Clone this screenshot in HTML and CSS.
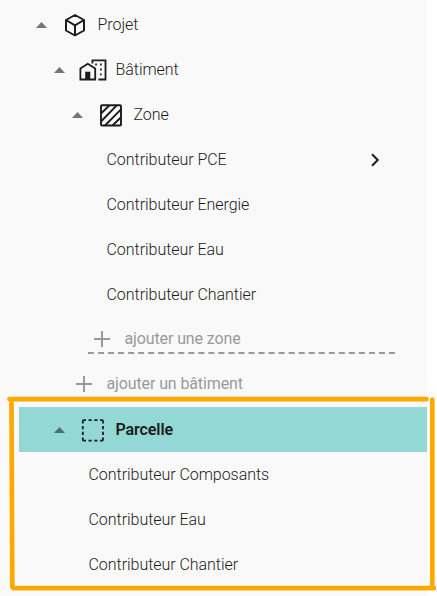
FILE: index.html
```html
<!DOCTYPE html>
<html lang="fr">
<head>
    <meta charset="UTF-8">
    <meta name="viewport" content="width=device-width, initial-scale=1.0">
    <title>Projet</title>
    <link rel="stylesheet" href="styles.css">
</head>
<body>
    <div class="tree">
        <div class="row level-1">
            <svg class="arrow" viewBox="0 0 11 6"><path d="M0 6L5.5 0L11 6Z"/></svg>
            <svg class="icon" viewBox="0 0 28 28" fill="none" stroke="#1c1c1c" stroke-width="2" stroke-linejoin="round">
                <path d="M14 4L23 9V19.5L14 24.5L5 19.5V9ZM5 9L14 14.3L23 9M14 14.3V24.5"/>
            </svg>
            <span class="label">Projet</span>
        </div>

        <div class="row level-2">
            <svg class="arrow" viewBox="0 0 11 6"><path d="M0 6L5.5 0L11 6Z"/></svg>
            <svg class="icon" viewBox="0 0 28 28" fill="none" stroke="#1c1c1c" stroke-width="1.8">
                <path d="M1.4 23.5V12.6L8.8 7.8L16.2 12.6V23.5Z"/>
                <path d="M6.2 24V15.7H11.3V24Z" fill="#1c1c1c" stroke="none"/>
                <path d="M13.4 7.5V4.4H26.5V23.5H19.4"/>
                <path d="M16.2 8.5H17.9M21 8.5H22.7M21 13.5H22.7M21 18.3H22.7"/>
            </svg>
            <span class="label">Bâtiment</span>
        </div>

        <div class="row level-3">
            <svg class="arrow" viewBox="0 0 11 6"><path d="M0 6L5.5 0L11 6Z"/></svg>
            <svg class="icon" viewBox="0 0 28 28" fill="none" stroke="#1c1c1c" stroke-width="1.9">
                <rect x="4" y="4.2" width="20" height="20.3" rx="1"/>
                <path d="M4 12.5L12.5 4.2M4 20.5L20 4.2M8 24.5L24 8.3M15.5 24.5L24 16.3"/>
            </svg>
            <span class="label">Zone</span>
        </div>

        <div class="row leaf-3">
            <span class="label">Contributeur PCE</span>
            <svg class="chevron" viewBox="0 0 10 14" fill="none" stroke="#1c1c1c" stroke-width="2">
                <path d="M2 1.3L7.7 7L2 12.7"/>
            </svg>
        </div>
        <div class="row leaf-3"><span class="label">Contributeur Energie</span></div>
        <div class="row leaf-3"><span class="label">Contributeur Eau</span></div>
        <div class="row leaf-3"><span class="label">Contributeur Chantier</span></div>

        <div class="add add-zone">
            <svg class="plus" viewBox="0 0 16 16" stroke="#999" stroke-width="2"><path d="M0 8H16M8 0V16"/></svg>
            <span>ajouter une zone</span>
        </div>
        <div class="add add-building">
            <svg class="plus" viewBox="0 0 16 16" stroke="#999" stroke-width="2"><path d="M0 8H16M8 0V16"/></svg>
            <span>ajouter un bâtiment</span>
        </div>

        <div class="row level-2 selected">
            <svg class="arrow" viewBox="0 0 11 6"><path d="M0 6L5.5 0L11 6Z"/></svg>
            <svg class="icon" viewBox="0 0 28 28" fill="none" stroke="#1c1c1c" stroke-width="1.8">
                <path d="M3.8 7.5V5.2Q3.8 4.2 4.8 4.2H7M21 4.2H23Q24 4.2 24 5.2V7.5M24 21.5V23.6Q24 24.6 23 24.6H21M7 24.6H4.8Q3.8 24.6 3.8 23.6V21.5"/>
                <path d="M9.5 4.2H12.7M15.3 4.2H18.5M9.5 24.6H12.7M15.3 24.6H18.5M3.8 10V13.2M3.8 15.8V19M24 10V13.2M24 15.8V19"/>
            </svg>
            <span class="label">Parcelle</span>
        </div>
        <div class="row leaf-2"><span class="label">Contributeur Composants</span></div>
        <div class="row leaf-2"><span class="label">Contributeur Eau</span></div>
        <div class="row leaf-2"><span class="label">Contributeur Chantier</span></div>
    </div>

    <!-- Cadre autour de la parcelle -->
    <svg class="frame" viewBox="0 0 437 596" fill="none" stroke="#ffa900" stroke-width="4.7" stroke-linecap="round">
        <path d="M9.5 399.2H426.5M11.5 403L12.3 587M432.3 399.5V586M13.5 588.2H434"/>
    </svg>
</body>
</html>
```
FILE: styles.css
```css
* {
    box-sizing: border-box;
}

body {
    margin: 0;
    background: #fff;
    color: #1c1c1c;
    font-family: Roboto, sans-serif;
    font-size: 16px;
    font-weight: 300;
    letter-spacing: -0.04px;
}

.tree {
    width: 427px;
    height: 596px;
    padding: 2px 0 0 19px;
    background: #f9f9f9;
    overflow: hidden;
}

.row {
    display: flex;
    align-items: center;
    height: 45px;
}

.level-1 {
    padding-left: 16.5px;
}

.level-2 {
    padding-left: 34.5px;
}

.level-3 {
    padding-left: 52.5px;
}

.leaf-2 {
    padding-left: 69.5px;
}

.leaf-3 {
    padding: 0 47px 0 87.5px;
    justify-content: space-between;
}

.arrow {
    width: 11px;
    height: 6px;
    fill: #757575;
}

.icon {
    width: 28px;
    height: 28px;
    margin: 0 8.5px 0 14.5px;
}

.chevron {
    width: 10px;
    height: 14px;
}

.add {
    display: flex;
    align-items: center;
    gap: 14.5px;
    color: #999;
    font-weight: 400;
    letter-spacing: -0.12px;
}

.plus {
    width: 16px;
    height: 16px;
}

.add-zone {
    width: 307px;
    height: 37px;
    margin-left: 69px;
    padding: 8px 0 0 6px;
    border-bottom: 2px dashed #999;
}

.add-building {
    height: 53px;
    padding: 6px 0 0 57px;
}

.selected {
    background: #93d8d4;
    font-weight: 600;
}

.selected .label {
    letter-spacing: -0.1px;
}

.selected .arrow {
    fill: #46706e;
}

.frame {
    position: absolute;
    top: 0;
    left: 0;
    width: 437px;
    height: 596px;
}
```
